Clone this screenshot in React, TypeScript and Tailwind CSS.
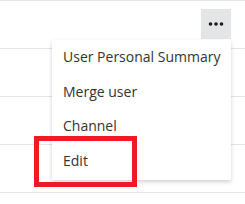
import React from "react";

const items = ["User Personal Summary", "Merge user", "Channel", "Edit"];

export default function App() {
	return (
		<div
			className="relative h-[204px] w-[245px] overflow-hidden bg-white"
			style={{ fontFamily: '"Open Sans", sans-serif' }}
		>
			{/* Table rows */}
			<div className="flex h-[48px] items-start justify-end border-t border-[#e3e5e8] pr-[14px] pt-[8px]">
				<button
					type="button"
					className="flex h-[30px] w-[30px] items-center justify-center bg-[#e4e5e6]"
				>
					<svg width="16" height="4" viewBox="0 0 16 4">
						<circle cx="2.5" cy="2" r="1.8" fill="#1a1a1a" />
						<circle cx="8" cy="2" r="1.8" fill="#1a1a1a" />
						<circle cx="13.5" cy="2" r="1.8" fill="#1a1a1a" />
					</svg>
				</button>
			</div>
			<div className="h-[48px] border-t border-[#e3e5e8]" />
			<div className="h-[48px] border-t border-[#e3e5e8]" />
			<div className="h-[48px] border-t border-[#e3e5e8]" />
			<div className="h-[48px] border-t border-[#e3e5e8]" />

			{/* Dropdown menu */}
			<div className="absolute right-[14px] top-[40px] w-[179px] bg-white pb-[2px] shadow-[0_2px_4px_rgba(0,0,0,0.18)]">
				{items.map((item) => (
					<div
						key={item}
						className="whitespace-nowrap px-[11px] py-[8px] text-[14px] leading-[18.5px] text-[#333333]"
					>
						{item}
					</div>
				))}
			</div>

			{/* Highlight box */}
			<div className="absolute left-[34px] top-[136px] h-[51px] w-[103px] border-[5px] border-[#ed1c24]" />
		</div>
	);
}
